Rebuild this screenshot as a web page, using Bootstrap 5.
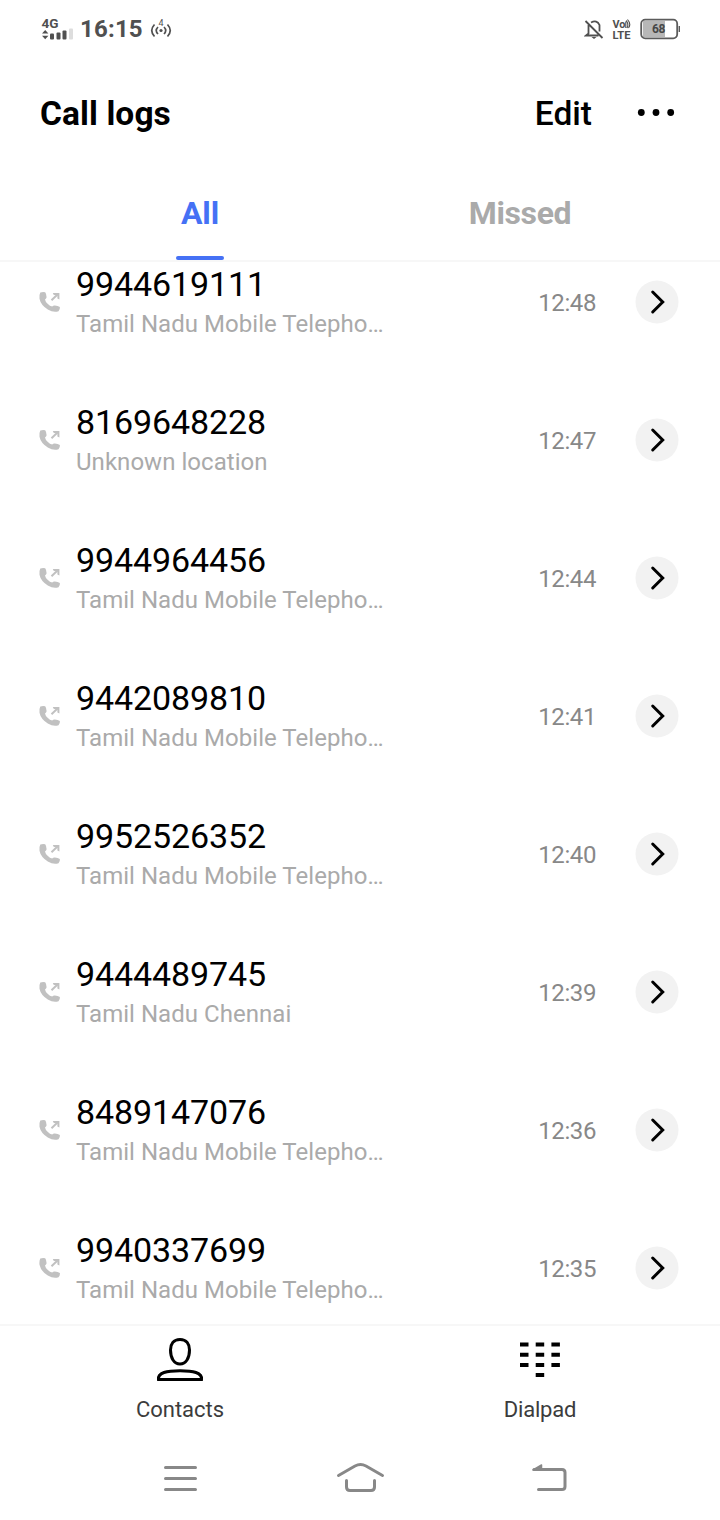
<!DOCTYPE html>
<html lang="en">
<head>
<meta charset="utf-8">
<meta name="viewport" content="width=device-width, initial-scale=1">
<title>Call logs</title>
<link href="https://cdn.jsdelivr.net/npm/bootstrap@5.3.0/dist/css/bootstrap.min.css" rel="stylesheet">
<style>
body{font-family:Roboto,sans-serif;background:#fff;color:#000}
.phone{width:720px;height:1520px}
.phone svg{display:block;flex:none}
.status-bar{height:58px;padding:0 40px 0 41px;color:#505050}
.clock{font-size:24px;font-weight:700;line-height:58px;margin-left:7px;letter-spacing:.2px}
.app-head{height:110px;padding:2px 44px 0 40px;font-size:33.500px;line-height:108px;font-weight:500}
.app-title{font-weight:700;font-size:33.500px;letter-spacing:.1px;margin-top:-1px}
.tabs{height:94px;border-bottom:2px solid #f7f7f7;padding:0 40px}
.tabs .tab-item{width:320px;height:92px;font-size:32px;line-height:91px;font-weight:700;color:#aaa;text-decoration:none;letter-spacing:-.35px}
.tabs .tab-item.active{color:#4571f5;letter-spacing:-.1px}
.tab-item.active::after{content:"";display:block;width:48px;height:4px;border-radius:2px;background:#4571f5;margin:-3px auto 0}
.log{height:1062px}
.log-list{margin-top:-29px}
.log-row{height:138px;padding:0 41px 0 38px}
.who{width:310px;margin-left:14px}
.num{font-size:34px;line-height:40px;margin-top:-1px;letter-spacing:-.12px}
.place{font-size:24px;line-height:30px;color:#aaa;margin-top:5px;letter-spacing:.04px}
.time{font-size:24px;color:#888;line-height:30px;margin-right:39px;padding-top:1px;letter-spacing:-.4px}
.go{width:44px;height:44px}
.dock{height:112px;border-top:2px solid #f7f7f7}
.dock-item{width:360px;font-size:22px;line-height:26px;color:#3c3c3c}
.dock-item svg{height:50px;margin-top:8px;margin-bottom:13px}
.dock-label-tight{letter-spacing:-.2px}
.sys-nav{height:84px}
</style>
</head>
<body>
<svg width="0" height="0" class="position-absolute" aria-hidden="true">
  <symbol id="outgoing" viewBox="0 0 24 24"><path fill="#c1c1c1" d="M2.300 2.600Q5 1.500 7.200 2.300Q8.600 4.300 8.600 7.200Q8.300 8.600 7 9.400Q7.400 11.600 9.600 13.800Q12 16.200 14.200 16.600Q15.200 15.300 16.800 15.400Q19.900 15.600 21.900 17Q22.200 19.600 20.500 21.300Q15.600 23 9.800 19.600Q2.700 15 1.500 8.800Q1.100 4.800 2.300 2.600Z"/><path d="M13.500 10.300L19.500 4.500" fill="none" stroke="#c1c1c1" stroke-width="2"/><path d="M14.800 3H21.400V9.400L19.400 8.500V5H15.800Z" fill="#c1c1c1"/></symbol>
  <symbol id="chev" viewBox="0 0 44 44"><circle cx="22" cy="22" r="21.500" fill="#f2f2f2"/><path d="M17.700 12L27.700 22L17.700 32" fill="none" stroke="#000" stroke-width="3" stroke-linecap="round" stroke-linejoin="miter"/></symbol>
</svg>
<div class="phone d-flex flex-column overflow-hidden">
  <header class="status-bar d-flex align-items-center">
    <svg width="32" height="30" viewBox="0 0 32 30" fill="#505050"><text x="0.500" y="14" font-size="13.500" font-weight="700" textLength="17" lengthAdjust="spacingAndGlyphs">4G</text><path d="M1 19.500L4.200 16L7.400 19.500ZM1 21.700L4.200 25.200L7.400 21.700Z"/><rect x="9" y="19.500" width="4" height="6" rx="1"/><rect x="15.500" y="18.500" width="4" height="7" rx="1"/><rect x="21.500" y="16.500" width="4" height="9" rx="1"/><rect x="28" y="14.500" width="4" height="11" rx="1" fill="#ddd"/></svg>
    <span class="clock">16:15</span>
    <svg width="22" height="24" viewBox="0 0 22 24" style="margin-left:7px"><g fill="none" stroke="#505050" stroke-width="1.700"><path d="M4.500 7.500Q-1 13.500 4.500 19.500M8 10Q4.500 13.500 8 17M17.500 7.500Q23 13.500 17.500 19.500M14 10Q17.500 13.500 14 17"/></g><circle cx="11" cy="13.500" r="1.600" fill="#505050"/><text x="11" y="9" text-anchor="middle" font-size="9" fill="#505050">4</text></svg>
    <svg class="ms-auto" width="20" height="24" viewBox="0 0 20 24"><g fill="none" stroke="#505050" stroke-width="1.800"><path d="M7 5.500Q13 2.500 15.500 8V14.500M4.500 8V16.500L2 18.500H14.500M1.500 4L18.500 21"/></g><path d="M7.500 20H12.500L10 22Z" fill="#505050"/></svg>
    <svg width="20" height="24" viewBox="0 0 20 24" fill="#505050" style="margin-left:8px"><text x="0.500" y="10.800" font-size="10.500" font-weight="700" textLength="13" lengthAdjust="spacingAndGlyphs">Vo</text><path d="M13.800 4.500V11M14.300 3.500Q17 7.500 15 11M15.500 2.500Q19.500 7 16.500 11" fill="none" stroke="#505050" stroke-width="1.100"/><text x="0.500" y="21.700" font-size="11.500" font-weight="700" textLength="18" lengthAdjust="spacingAndGlyphs">LTE</text></svg>
    <svg width="40" height="22" viewBox="0 0 40 22" style="margin-left:8px"><rect x="3" y="3" width="22" height="16" fill="#b7b7b7"/><rect x="1.200" y="1.700" width="36" height="18.600" rx="4" fill="none" stroke="#5b5b5b" stroke-width="1.800"/><rect x="38.600" y="8" width="1.400" height="6" fill="#5b5b5b"/><text x="18.700" y="15.300" text-anchor="middle" font-size="12" font-weight="700" fill="#484848" textLength="13.500">68</text></svg>
  </header>

  <div class="app-head d-flex align-items-center">
    <span class="app-title">Call logs</span>
    <span class="ms-auto">Edit</span>
    <svg width="40" height="10" viewBox="0 0 40 10" style="margin-left:44px"><circle cx="5.300" cy="3.500" r="3.400"/><circle cx="20" cy="3.500" r="3.400"/><circle cx="34.700" cy="3.500" r="3.400"/></svg>
  </div>

  <nav class="tabs d-flex">
    <a class="tab-item active text-center" href="#">All</a>
    <a class="tab-item text-center" href="#">Missed</a>
  </nav>

  <main class="log overflow-hidden">
    <div class="log-list" id="logList"></div>
  </main>

  <div class="dock d-flex">
    <div class="dock-item d-flex flex-column align-items-center">
      <svg width="50" viewBox="0 0 50 50"><g fill="none" stroke="#000" stroke-width="3"><path d="M25 5.500C18.500 5.500 15.500 10 15.500 16C15.500 24 19 30 25 30S34.500 24 34.500 16C34.500 10 31.500 5.500 25 5.500Z"/><path d="M3.500 45.500C2.500 38.500 12 36.700 25 36.700S47.500 38.500 46.500 45.500Z"/></g></svg>
      <span>Contacts</span>
    </div>
    <div class="dock-item d-flex flex-column align-items-center">
      <svg width="50" viewBox="0 0 50 50"><path d="M5 10.500h8.500m7.200 0h8.500m7.200 0h8.500M5 20.700h8.500m7.200 0h8.500m7.200 0h8.500M5 30.900h8.500m7.200 0h8.500m7.200 0h8.500M20.700 41h8.500" fill="none" stroke="#000" stroke-width="4"/></svg>
      <span class="dock-label-tight">Dialpad</span>
    </div>
  </div>

  <nav class="sys-nav">
    <svg width="720" height="84" viewBox="0 1436 720 84" fill="none" stroke="#888" stroke-width="3" stroke-linecap="round" stroke-linejoin="round"><path d="M165.500 1467.500H195.500M165.500 1478.500H195.500M165.500 1489.500H195.500"/><path d="M338.500 1475.500L355 1466Q360.500 1463 366 1466L382.500 1475.500M346.500 1480.500V1487Q346.500 1490.500 350 1490.500H371Q374.500 1490.500 374.500 1487V1480.500"/><path d="M538.500 1489.500H562Q565 1489.500 565 1486.500V1472.500Q565 1469.500 562 1469.500H534"/><path d="M533 1470L541.500 1465V1470Z" fill="#888" stroke-width="1.500"/></svg>
  </nav>
</div>
<script src="https://cdn.jsdelivr.net/npm/bootstrap@5.3.0/dist/js/bootstrap.bundle.min.js"></script>
<script>
const tn = "Tamil Nadu Mobile Telepho…";
const calls = [
  ["9944619111", tn, "12:48"], ["8169648228", "Unknown location", "12:47"],
  ["9944964456", tn, "12:44"], ["9442089810", tn, "12:41"],
  ["9952526352", tn, "12:40"], ["9444489745", "Tamil Nadu Chennai", "12:39"],
  ["8489147076", tn, "12:36"], ["9940337699", tn, "12:35"]
];
document.getElementById("logList").innerHTML = calls.map(([num, place, time]) => `
  <div class="log-row d-flex align-items-center">
    <svg width="24" height="24"><use href="#outgoing"/></svg>
    <div class="who text-nowrap"><div class="num">${num}</div><div class="place">${place}</div></div>
    <span class="time ms-auto">${time}</span>
    <span class="go"><svg width="44" height="44"><use href="#chev"/></svg></span>
  </div>`).join("");
</script>
</body>
</html>
